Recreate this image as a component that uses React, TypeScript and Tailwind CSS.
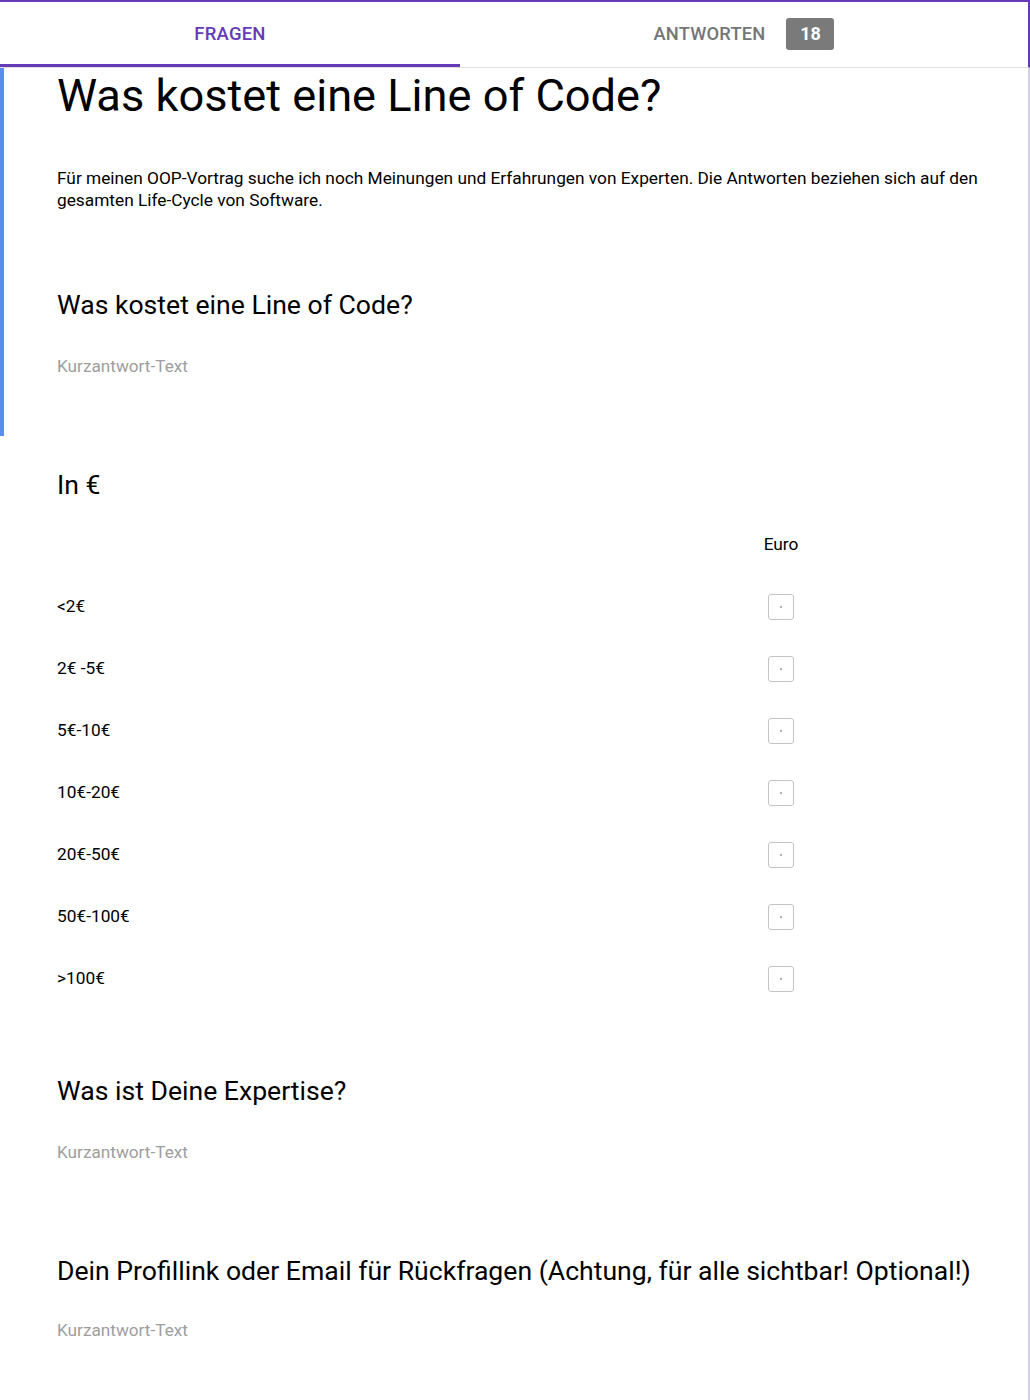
import React from "react";

const rows = ["<2€", "2€ -5€", "5€-10€", "10€-20€", "20€-50€", "50€-100€", ">100€"];

function Checkbox() {
  return (
    <div className="w-[26px] h-[26px] rounded-[3px] border-[1.5px] border-[#c4c4c4] flex items-center justify-center">
      <div className="w-[2px] h-[2px] bg-[#b0b0b0]" />
    </div>
  );
}

export default function App() {
  return (
    <div
      className="w-[1030px] h-[1400px] bg-white text-black overflow-hidden"
      style={{ fontFamily: "Roboto, 'Noto Sans', Arial, sans-serif" }}
    >
      {/* Header */}
      <div className="h-[68px] border-t-2 border-r-2 border-[#673ab7] border-b border-b-[#e0e0e0] flex relative">
        <div className="w-[460px] flex items-center justify-center relative">
          <span className="text-[18.5px] font-medium text-[#673ab7] tracking-[0.2px]">FRAGEN</span>
          <div className="absolute left-0 right-0 bottom-0 h-[3px] bg-[#673ab7]" />
        </div>
        <div className="flex-1 flex items-center justify-center gap-[21px] pb-[2px]">
          <span className="text-[18.3px] font-medium text-[#757575] tracking-[0.2px]">ANTWORTEN</span>
          <span className="w-[48px] h-[32px] rounded-[3px] bg-[#7a7a7a] text-white text-[18px] font-bold flex items-center justify-center">
            18
          </span>
        </div>
      </div>

      {/* Body */}
      <div className="border-r-2 border-[#d3cfe3] h-[1332px] bg-white">
        {/* Section 1 */}
        <div className="border-l-4 border-[#5b8def] pl-[53px] pb-[58px] bg-white">
          <h1 className="text-[45.2px] leading-[56px] font-normal">Was kostet eine Line of Code?</h1>
          <p className="mt-[43px] text-[17.3px] leading-[22px] pr-[40px]">
            Für meinen OOP-Vortrag suche ich noch Meinungen und Erfahrungen von Experten. Die Antworten beziehen sich auf den gesamten Life-Cycle von Software.
          </p>
          <h2 className="mt-[78px] text-[26.6px] leading-[32px]">Was kostet eine Line of Code?</h2>
          <div className="mt-[33px] text-[17.2px] leading-[24px] text-[#9e9e9e]">Kurzantwort-Text</div>
        </div>

        {/* Section 2 */}
        <div className="pl-[57px] pr-[207px]">
          <h2 className="mt-[33px] text-[26.6px] leading-[32px]">In €</h2>
          <div className="mt-[12px]">
            <div className="flex h-[62px] items-center">
              <div className="flex-1" />
              <div className="w-[80px] text-center text-[17.3px] pt-[2px]">Euro</div>
            </div>
            {rows.map((r) => (
              <div key={r} className="flex h-[62px] items-center">
                <div className="flex-1 text-[17.3px] pt-[2px]">{r}</div>
                <div className="w-[80px] flex justify-center pt-[1px]">
                  <Checkbox />
                </div>
              </div>
            ))}
          </div>
        </div>

        {/* Section 3 */}
        <div className="pl-[57px]">
          <h2 className="mt-[66px] text-[26.6px] leading-[32px]">Was ist Deine Expertise?</h2>
          <div className="mt-[33px] text-[17.2px] leading-[24px] text-[#9e9e9e]">Kurzantwort-Text</div>
        </div>

        {/* Section 4 */}
        <div className="pl-[57px]">
          <h2 className="mt-[91px] text-[26.6px] leading-[32px]">
            Dein Profillink oder Email für Rückfragen (Achtung, für alle sichtbar! Optional!)
          </h2>
          <div className="mt-[31px] text-[17.2px] leading-[24px] text-[#9e9e9e]">Kurzantwort-Text</div>
        </div>
      </div>
    </div>
  );
}
